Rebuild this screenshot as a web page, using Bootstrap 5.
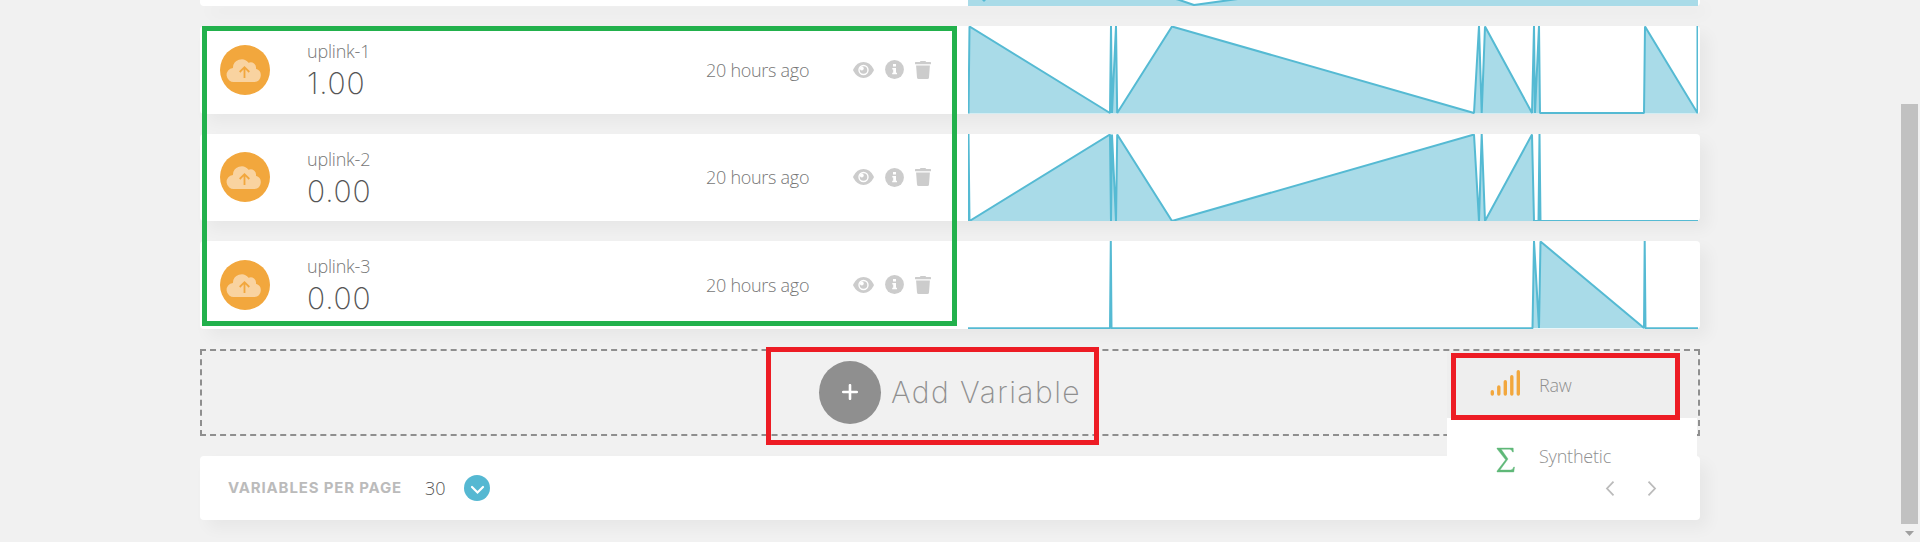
<!DOCTYPE html>
<html lang="en">
<head>
<meta charset="utf-8">
<title>Variables</title>
<link href="https://cdn.jsdelivr.net/npm/bootstrap@5.3.0/dist/css/bootstrap.min.css" rel="stylesheet">
<style>
body{background:#f1f1f1;font-family:"Open Sans",sans-serif;font-weight:300;font-size:18px;color:#777;height:542px}
.page{width:1500px;margin-left:200px;gap:20px}
.vcard{height:87.5px;background:#fff;border-radius:4px;box-shadow:8px 8px 16px rgba(0,0,0,.045)}
.cut{height:6px;border-radius:0 0 4px 4px}
.info{width:768px;padding-left:20px}
.labels{width:399px;margin-left:37px;line-height:24px;letter-spacing:-.2px}
.num{font-family:Inter,sans-serif;font-size:30px;line-height:34px;font-weight:200;color:#555;letter-spacing:.8px;margin-top:3px}
.when{width:147px;letter-spacing:-.28px;padding-top:1px}
.icons{gap:11px}
.plot{width:730px;height:100%;display:block}
.plot path{fill:#a9dbe8;stroke:#55bad3;stroke-width:2;stroke-linejoin:bevel}
.adder{height:87.5px;border:2px dashed #8f8f8f;padding-left:617px;gap:10px}
.plus{width:62px;height:63px;border-radius:50%;background:#8f8f8f}
.addtxt{font-family:Inter,sans-serif;font-size:30px;font-weight:200;color:#8f8f8f;white-space:nowrap;letter-spacing:1.45px}
.pager{height:64px;padding-left:28px}
.perpage{font-family:Inter,sans-serif;font-weight:700;font-size:15px;color:#bbb;width:197px;white-space:nowrap;letter-spacing:.83px;padding-top:1px}
.mark-box{position:absolute;border:5px solid #ed1c24;z-index:5}
.menu{position:absolute;left:1447px;top:351px;width:250px;z-index:3;background:#fff}
.menu .item{height:71px;padding-left:92px;padding-top:5px;position:relative;color:#8f8f8f;letter-spacing:-.2px}
.menu .item:first-child{height:67px;background:#eee;padding-top:2px}
.menu svg{position:absolute}
.sbar{position:absolute;left:1901px;top:104px;width:17px;height:420px;background:#c1c1c1}
</style>
</head>
<body class="position-relative overflow-hidden">
<svg width="0" height="0" class="position-absolute">
<defs>
<symbol id="cloud" viewBox="0 0 50 50"><circle cx="25" cy="25" r="25" fill="#f2a73d"/><path d="M14.500 37A7 7 0 0 1 12.900 22.900A8.700 8.700 0 0 1 28.500 17.800A5.300 5.300 0 0 1 35.900 23.700A6.800 6.800 0 0 1 34.500 37Z" fill="#f9d3a0"/><path d="M24.500 33V22.400M19.700 27L24.500 22.200L29.300 27" fill="none" stroke="#f2a73d" stroke-width="1.800"/></symbol>
<symbol id="eye" viewBox="0 0 21 16"><path d="M.3 7.200Q4 0 10.500 0T20.700 7.200Q21 8 20.700 8.800Q17 16 10.500 16T.3 8.800Q0 8 .3 7.200Z" fill="#ccc"/><circle cx="10.500" cy="8" r="4.500" fill="#ccc" stroke="#fff" stroke-width="1.400"/><circle cx="8.800" cy="6.500" r="1.900" fill="#fff"/></symbol>
<symbol id="inf" viewBox="0 0 19 19"><circle cx="9.500" cy="9.500" r="9.400" fill="#ccc"/><path d="M8 4h3v2.600H8zM7.300 8H11v4.700h1v1.600H7.200v-1.600h1V9.600h-.9z" fill="#fff"/></symbol>
<symbol id="bin" viewBox="0 0 16 18"><path d="M.6 1H4.800L5.600 0H10.400L11.200 1H15.400Q16 1 16 1.600V2.800Q16 3.300 15.400 3.300H.6Q0 3.300 0 2.800V1.600Q0 1 .6 1ZM1.100 4.500H14.900L14 16.400Q13.900 18 12.300 18H3.700Q2.100 18 2 16.400Z" fill="#ccc"/></symbol>
</defs></svg>

<main class="page d-flex flex-column">
<div class="vcard cut d-flex"><div class="info"></div>
<svg class="plot" viewBox="0 0 730 6"><path d="M-2 8V-5H12L16 1L20-5H190L210-.5L226 5L266-.5L300-5H740V8Z"/></svg></div>

<div class="vcard d-flex"><div class="info d-flex align-items-center"><svg width="50" height="50" class="flex-shrink-0"><use href="#cloud"/></svg><div class="labels flex-shrink-0"><div>uplink-1</div><div class="num">1.00</div></div>
<div class="when flex-shrink-0">20 hours ago</div><div class="icons d-flex align-items-center"><svg width="21" height="16"><use href="#eye"/></svg><svg width="19" height="19"><use href="#inf"/></svg><svg width="16" height="18"><use href="#bin"/></svg></div></div>
<svg class="plot" viewBox="0 0 730 87.5" preserveAspectRatio="none"><path d="M.5 87.500L1.500 .5L142 87L143 0L144 87L148 0L149.200 87L204 .5L506 87L511 0L513.700 87L517 .5L564 87L566 0L567 87L571 0L572 87H676L677 .5L729.500 87V0V87.500"/></svg></div>

<div class="vcard d-flex"><div class="info d-flex align-items-center"><svg width="50" height="50" class="flex-shrink-0"><use href="#cloud"/></svg><div class="labels flex-shrink-0"><div>uplink-2</div><div class="num">0.00</div></div>
<div class="when flex-shrink-0">20 hours ago</div><div class="icons d-flex align-items-center"><svg width="21" height="16"><use href="#eye"/></svg><svg width="19" height="19"><use href="#inf"/></svg><svg width="16" height="18"><use href="#bin"/></svg></div></div>
<svg class="plot" viewBox="0 0 730 87.5" preserveAspectRatio="none"><path d="M.5 87V0L1.500 87L142 .5L143 87L144 .5L148 87L149.200 .5L204 87L506 .5L511 87L513.700 0L517 87L564 .5L566 87H570.500L571.500 0L572.500 87H730"/></svg></div>

<div class="vcard d-flex"><div class="info d-flex align-items-center"><svg width="50" height="50" class="flex-shrink-0"><use href="#cloud"/></svg><div class="labels flex-shrink-0"><div>uplink-3</div><div class="num">0.00</div></div>
<div class="when flex-shrink-0">20 hours ago</div><div class="icons d-flex align-items-center"><svg width="21" height="16"><use href="#eye"/></svg><svg width="19" height="19"><use href="#inf"/></svg><svg width="16" height="18"><use href="#bin"/></svg></div></div>
<svg class="plot" viewBox="0 0 730 87.5" preserveAspectRatio="none"><path d="M0 87.300H142L142.800 0L143.500 87.300H564.500L566 0L571 87L572.500 .5L676 87L676.700 0L677.500 87.300H730"/></svg></div>

<div class="adder d-flex align-items-center"><div class="plus flex-shrink-0 d-flex align-items-center justify-content-center"><svg width="16" height="16" viewBox="0 0 16 16"><path d="M8 1.200V14.800M1.200 8H14.800" stroke="#fff" stroke-width="2.600" stroke-linecap="round"/></svg></div><div class="addtxt">Add Variable</div></div>

<div class="vcard pager d-flex align-items-center"><div class="perpage">VARIABLES PER PAGE</div><div style="width:39px;color:#555">30</div>
<svg width="26" height="26" viewBox="0 0 26 26"><circle cx="13" cy="13" r="13" fill="#55b8d2"/><path d="M8 12L13.500 17.500L19 12" fill="none" stroke="#fff" stroke-width="2.200" stroke-linecap="round"/></svg>
</div>
</main>

<div class="menu"><div class="item d-flex align-items-center"><svg style="left:43px;top:19px" width="31" height="27" viewBox="0 0 31 27"><path d="M2.300 21.800V24M8.800 17V24M15.300 11.800V24M21.800 6.800V24M28.300 1.800V24" stroke="#f2a73d" stroke-width="3.400" stroke-linecap="round"/></svg><span>Raw</span></div>
<div class="item d-flex align-items-center"><svg style="left:49px;top:29px" width="20" height="26" viewBox="0 0 20 26"><path d="M1 1H17.200L17.400 5H16.500Q16 2.300 13.500 2.300H5.200L12 12L4 23H14.500Q17 23 17.700 20H18.500L17.800 25H1V24L9.600 12.800L1 1.800Z" fill="#5fb878" stroke="#5fb878" stroke-width=".4"/></svg><span>Synthetic</span></div>
<svg style="left:158px;top:130px" width="52" height="15" viewBox="0 0 52 15"><path d="M8.500 .7L2 7.500L8.500 14.300M43.500 .7L50 7.500L43.500 14.300" fill="none" stroke="#bbb" stroke-width="1.800"/></svg></div>

<div class="mark-box" style="left:202px;top:26px;width:755px;height:300px;border-color:#22b14c"></div>
<div class="mark-box" style="left:766px;top:347px;width:333px;height:98px"></div>
<div class="mark-box" style="left:1451px;top:353px;width:229px;height:67px"></div>
<div class="sbar"></div>
<svg class="position-absolute" style="left:1905px;top:531px" width="9" height="5" viewBox="0 0 9 5"><path d="M0 0H9L4.500 5Z" fill="#a0a0a0"/></svg>
<script src="https://cdn.jsdelivr.net/npm/bootstrap@5.3.0/dist/js/bootstrap.bundle.min.js"></script>
</body>
</html>
